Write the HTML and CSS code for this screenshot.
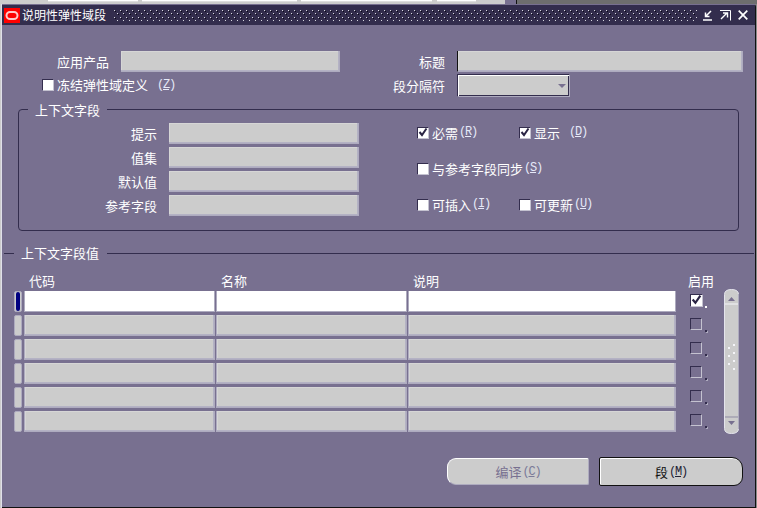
FILE: index.html
```html
<!DOCTYPE html>
<html lang="zh">
<head>
<meta charset="utf-8">
<title>说明性弹性域段</title>
<link rel="stylesheet" href="styles.css">
</head>
<body>
<div class="desk">
  <div class="strip">
    <span class="tab tab-a"></span><span class="tab tab-b"></span><span class="tab tab-c"></span><span class="tab tab-d"></span><span class="strip-purple"></span><span class="strip-dark"></span>
  </div>
  <div class="window">
    <header class="titlebar">
      <svg class="logo" width="16" height="15" viewBox="0 0 16 15"><rect width="16" height="15" fill="#f00"/><rect x="2.500" y="4" width="11" height="7" rx="3.500" fill="none" stroke="#ffc8c8" stroke-width="2"/></svg>
      <span class="title-text">说明性弹性域段</span>
      <svg class="dots"><defs><pattern id="dp" width="6" height="7" patternUnits="userSpaceOnUse"><rect x="1" y="0" width="1" height="1" fill="#d8d8e0"/><rect x="2" y="1" width="1" height="1" fill="#0c0a18"/><rect x="4" y="3" width="1" height="1" fill="#d8d8e0"/><rect x="5" y="4" width="1" height="1" fill="#0c0a18"/></pattern></defs><rect width="100%" height="100%" fill="url(#dp)"/></svg>
      <svg class="win-icon" width="10" height="11" viewBox="0 0 10 11"><path d="M0 10H9M8 1L3 6M2.500 2.500V6.500H6.500" fill="none" stroke="#fff" stroke-width="1.500"/></svg>
      <svg class="win-icon" width="11" height="11" viewBox="0 0 11 11"><path d="M0 .5H10.500V10.500" fill="none" stroke="#fff"/><path d="M1 9L6.500 3.500M3 3H7.500V7.500" fill="none" stroke="#fff" stroke-width="1.400"/></svg>
      <svg class="win-icon" width="10" height="10" viewBox="0 0 10 10"><path d="M.7 .7L9.300 9.300M9.300 .7L.7 9.300" fill="none" stroke="#fff" stroke-width="1.700"/></svg>
    </header>

    <main class="body">
      <section class="head-grid">
        <label class="lbl">应用产品</label>
        <div class="field"></div>
        <label class="lbl">标题</label>
        <div class="field field-caret"></div>
        <div class="check-row head-check"><span class="cb"></span><span>冻结弹性域定义</span><span class="mn mn-gap">(<u>Z</u>)</span></div>
        <label class="lbl lbl-select">段分隔符</label>
        <div class="select"><svg width="8" height="4" viewBox="0 0 8 4"><path d="M0 0H8L4 4Z" fill="#787090"/></svg></div>
      </section>

      <section class="group">
        <div class="legend">上下文字段</div>
        <div class="group-fields">
          <label class="lbl">提示</label><div class="field"></div>
          <label class="lbl">值集</label><div class="field"></div>
          <label class="lbl">默认值</label><div class="field"></div>
          <label class="lbl">参考字段</label><div class="field"></div>
        </div>
        <div class="group-checks">
          <div class="check-row"><span class="cb"><svg width="10" height="10" viewBox="0 0 10 10"><path d="M1.500 5L4 8L8.500 1.500" fill="none" stroke="#2a2444" stroke-width="2"/></svg></span><span>必需</span><span class="mn">(<u>R</u>)</span></div>
          <div class="check-row"><span class="cb"><svg width="10" height="10" viewBox="0 0 10 10"><path d="M1.500 5L4 8L8.500 1.500" fill="none" stroke="#2a2444" stroke-width="2"/></svg></span><span>显示</span><span class="mn mn-gap">(<u>D</u>)</span></div>
          <div class="check-row wide"><span class="cb"></span><span>与参考字段同步</span><span class="mn">(<u>S</u>)</span></div>
          <div class="check-row"><span class="cb"></span><span>可插入</span><span class="mn">(<u>I</u>)</span></div>
          <div class="check-row"><span class="cb"></span><span>可更新</span><span class="mn">(<u>U</u>)</span></div>
        </div>
      </section>

      <div class="divider"><span class="rule rule-short"></span><span class="divider-text">上下文字段值</span><span class="rule rule-long"></span></div>

      <section class="table">
        <div class="th th-0"></div><div class="th">代码</div><div class="th">名称</div><div class="th">说明</div><div class="th th-en">启用</div>
        <svg class="scrollbar" width="15" height="145" viewBox="0 0 15 145">
          <path d="M.5 5.500Q.5 .5 7.500 .5Q14.500 .5 14.500 5.500V139.500Q14.500 144.500 7.500 144.500Q.5 144.500 .5 139.500Z" fill="#ccc" stroke="#e4e4ec"/>
          <path d="M14.500 5V140" stroke="#aeabbf"/>
          <path d="M1 15H14" stroke="#f4f4f8"/>
          <path d="M1 128H14" stroke="#8f8ba3"/>
          <path d="M4 12L7.500 8L11 12Z" fill="#787090"/>
          <path d="M4 132H11L7.500 136Z" fill="#787090"/>
          <g fill="#f4f4f8"><rect x="9" y="55" width="2" height="2"/><rect x="4" y="58" width="2" height="2"/><rect x="9" y="63" width="2" height="2"/><rect x="4" y="66" width="2" height="2"/><rect x="9" y="71" width="2" height="2"/><rect x="4" y="74" width="2" height="2"/><rect x="9" y="79" width="2" height="2"/></g>
        </svg>

        <div class="ind ind-on"><span></span></div><div class="field cell cell-white"></div><div class="field cell cell-white"></div><div class="field cell cell-white cell-wide"></div><div class="tcheck"><span class="cb cb-table-on"><svg width="11" height="11" viewBox="0 0 10 10"><path d="M1.500 5L4 8L8.500 1.500" fill="none" stroke="#2a2444" stroke-width="2"/></svg></span><i class="dot dot-on"></i></div>
        <div class="ind"></div><div class="field cell"></div><div class="field cell"></div><div class="field cell cell-wide"></div><div class="tcheck"><span class="cb-empty"></span><i class="dot"></i></div>
        <div class="ind"></div><div class="field cell"></div><div class="field cell"></div><div class="field cell cell-wide"></div><div class="tcheck"><span class="cb-empty"></span><i class="dot"></i></div>
        <div class="ind"></div><div class="field cell"></div><div class="field cell"></div><div class="field cell cell-wide"></div><div class="tcheck"><span class="cb-empty"></span><i class="dot"></i></div>
        <div class="ind"></div><div class="field cell"></div><div class="field cell"></div><div class="field cell cell-wide"></div><div class="tcheck"><span class="cb-empty"></span><i class="dot"></i></div>
        <div class="ind"></div><div class="field cell"></div><div class="field cell"></div><div class="field cell cell-wide"></div><div class="tcheck"><span class="cb-empty"></span><i class="dot"></i></div>
      </section>

      <footer class="actions">
        <button class="btn btn-off">编译<span class="mn">(<u>C</u>)</span></button>
        <button class="btn btn-on">段<span class="mn">(<u>M</u>)</span></button>
      </footer>
    </main>
  </div>
</div>
</body>
</html>
```
FILE: styles.css
```css
* { box-sizing: border-box; }
html, body { margin: 0; padding: 0; }
body { width: 757px; height: 508px; overflow: hidden; background: #ccc; font-family: "Noto Sans CJK SC", "Liberation Sans", sans-serif; font-size: 13px; color: #fff; }
.desk { width: 757px; height: 508px; display: flex; flex-direction: column; background: linear-gradient(90deg, #ccc 755px, #8a8a8a 755px); }

.strip { height: 4px; display: flex; background: #ccc; flex: none; }
.tab { height: 2px; border-top: 1px solid #fff; background: #ddd; }
.tab-a { width: 90px; margin-left: 48px; }
.tab-b { width: 155px; margin-left: 4px; }
.tab-c { width: 131px; margin-left: 4px; }
.tab-d { width: 39px; margin-left: 5px; }
.strip-purple { width: 11px; height: 4px; margin-left: 29px; background: #787090; }
.strip-dark { flex: 1; height: 4px; background: #6e6e6e; border-left: 1px solid #111; }

.window { width: 754px; height: 504px; margin-left: 2px; flex: none; background: #787090; border-right: 1px solid #111; border-bottom: 1px solid #111; box-shadow: -1px 0 0 #e0e0ea; border-top-right-radius: 3px; }

.titlebar { height: 21px; display: flex; align-items: center; background: #332d4d; border-top: 1px solid #787090; }
.logo { margin-left: 2px; flex: none; }
.title-text { margin-left: 2px; font-size: 12px; line-height: 20px; width: 91px; flex: none; white-space: nowrap; }
.dots { flex: 1; height: 11px; min-width: 0; margin-right: 6px; }
.win-icon { flex: none; margin-right: 7px; }

.body { display: flex; flex-direction: column; }

.lbl { display: block; text-align: right; padding-right: 12px; line-height: 21px; height: 21px; white-space: nowrap; }
.field { height: 21px; background: #ccc; box-shadow: inset -1px -1px 0 #b4b2c4, inset 1px 1px 0 #d6d6d6; border-bottom: 1px solid #aeabbf; border-right: 1px solid #aeabbf; }
.field-caret { border-left: 1px solid #111; }

.head-grid { margin-top: 26px; display: grid; grid-template-columns: 119px 219px 117px 286px; grid-template-rows: 21px 23px; row-gap: 2px; }
.head-check { padding-left: 40px; grid-column: 1 / 3; height: 21px; }
.lbl-select { margin-top: 1px; }
.select { width: 113px; height: 23px; display: flex; align-items: center; justify-content: flex-end; padding-right: 3px; background: #ccc; border: 1px solid #332d4d; border-right-color: #aeabbf; border-bottom-color: #aeabbf; box-shadow: inset 1px 1px 0 #fff, inset -1px -1px 0 #332d4d; }

.check-row { display: flex; align-items: center; white-space: nowrap; }
.cb { width: 11px; height: 11px; margin-right: 4px; background: #fff; flex: none; border-top: 1px solid #332d4d; border-left: 1px solid #332d4d; box-shadow: 1px 1px 0 #c4c2d0; display: block; }
.cb svg { display: block; margin: -1px 0 0 0; }
.mn { font-family: "Liberation Mono", monospace; font-size: 12px; letter-spacing: -1.2px; color: #e6e9f8; margin-left: 1px; }
.mn-gap { margin-left: 9px; }

.group { position: relative; margin: 12px 0 0 16px; width: 721px; height: 122px; border: 1px solid #332d4d; border-radius: 4px; display: flex; }
.legend { position: absolute; left: 9px; top: -7px; padding: 0 7px; background: #787090; line-height: 14px; }
.group-fields { margin-top: 13px; display: grid; grid-template-columns: 150px 190px; grid-auto-rows: 21px; row-gap: 3px; align-self: flex-start; }
.group-checks { margin: 4px 0 0 58px; display: grid; grid-template-columns: 102px 102px; grid-auto-rows: 36px; align-self: flex-start; }
.wide { grid-column: 1 / 3; }

.divider { display: flex; align-items: center; height: 16px; margin: 14px 0 0 2px; }
.rule { height: 1px; background: #332d4d; }
.rule-short { width: 10px; }
.divider-text { padding: 0 8px 0 7px; line-height: 16px; }
.rule-long { width: 647px; }

.table { margin: 13px 0 0 12px; display: grid; grid-template-columns: 10px 192px 192px 282px 34px 15px; grid-template-rows: 14px repeat(6, 21px); row-gap: 3px; }
.th { line-height: 13px; padding-left: 5px; height: 14px; white-space: nowrap; }
.th-0 { padding: 0; }
.th-en { padding-left: 0; margin-left: -2px; }
.scrollbar { grid-column: 6; grid-row: 1 / 8; align-self: start; margin-top: 15px; display: block; }

.ind { width: 8px; height: 21px; background: #ccc; border: 1px solid #aeabbf; border-radius: 2px; }
.ind-on { padding: 0 1px; }
.ind-on span { display: block; width: 4px; height: 19px; background: #000080; border-radius: 2px; }
.group-fields .field { width: 190px; }
.cell { width: 191px; border-left: 1px solid #aeabbf; }
.cell-wide { width: 268px; }
.cell-white { background: #fff; box-shadow: inset 1px 1px 0 #fff; }
.tcheck { display: flex; align-items: flex-end; padding-bottom: 4px; }
.cb-table-on { margin: 0 0 2px; width: 12px; height: 12px; box-shadow: 1px 1px 0 #c4c2d0; }
.cb-empty { width: 12px; height: 12px; margin-bottom: 2px; border-top: 1px solid #332d4d; border-left: 1px solid #332d4d; border-right: 1px solid #c4c2d0; border-bottom: 1px solid #c4c2d0; flex: none; }
.dot { width: 2px; height: 2px; margin-left: 3px; background: #332d4d; display: block; box-shadow: 1px 1px 0 #aeabbf; }
.dot-on { background: #fff; box-shadow: none; }

.actions { margin-top: 25px; display: flex; justify-content: flex-end; align-items: center; gap: 10px; padding-right: 12px; }
.btn { font-family: inherit; font-size: 13px; padding: 0; background: #ccc; display: flex; align-items: center; justify-content: center; }
.btn-off { width: 142px; height: 27px; color: #787090; border: 1px solid #aeabbf; border-top-color: #fff; border-left-color: #fff; border-radius: 9px 2px 2px 9px; }
.btn-off .mn { color: #7a7a98; }
.btn-on { width: 144px; height: 29px; color: #111; border: 1px solid #111; border-radius: 2px 11px 9px 2px; box-shadow: inset 1px 1px 0 #fff; }
.btn-on .mn { color: #223; }
```
